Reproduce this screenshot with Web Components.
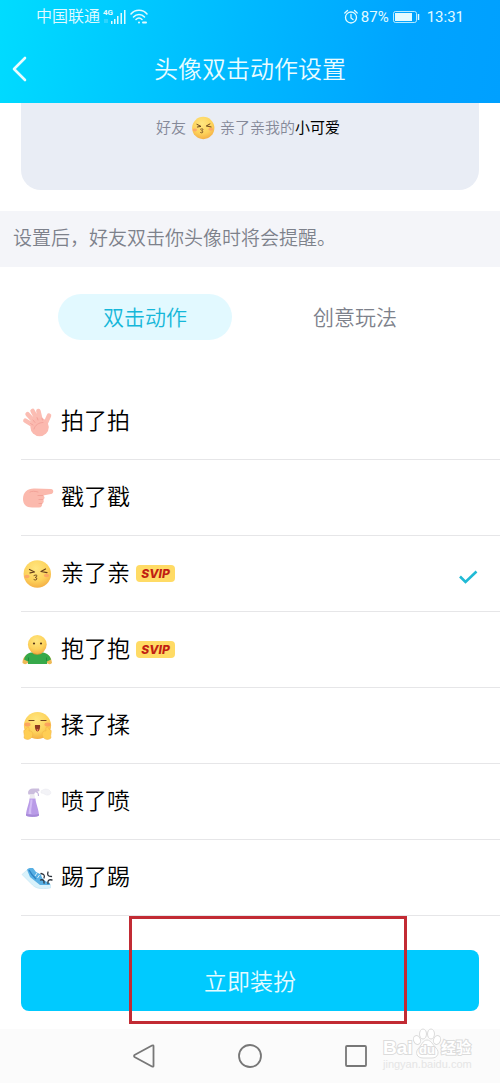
<!DOCTYPE html>
<html lang="zh-CN">
<head>
<meta charset="utf-8">
<meta name="viewport" content="width=device-width, initial-scale=1">
<title>头像双击动作设置</title>
<style>
    body {
        margin: 0;
        background: #fff;
        color: #000;
        font-family: Roboto, "Noto Sans CJK SC", sans-serif;
        font-weight: 350;
    }
</style>
</head>
<body>
<nudge-settings-page></nudge-settings-page>

<script>
// Icon artwork, all drawn on a 32x32 grid
const ICONS = {
    pat: `
        <g stroke="#fbbdb3" stroke-width="4.6" stroke-linecap="round" fill="none">
            <path d="M15 21 4.4 14.6M15.500 18 6.600 8.200M18 17 11.600 5M20 16 17.400 5M23 21 28 9.600"/>
        </g>
        <circle cx="18.6" cy="21" r="9.2" fill="#fbb9af"/>
        <path d="M9.500 17.500 12 19M12 14 14 16.500M16 11.500 17 14M21 12l.4 2M13 23c1-4 5-6.500 9-6.500" stroke="#f09d95" stroke-width=".8" fill="none" stroke-linecap="round"/>`,
    poke: `
        <path d="M2 17C2 10 7 6 14 6.5L30 7c3 0 3 4.5 0 5l-8 1.5c2 1 2 3.500 0 4 1.500 1.500.5 3.500-1 4 .5 2-.5 4-3 4H11C5 25.500 2 22 2 17Z" fill="#fbb9ad"/>
        <path d="M22 13.500h-5M18 17.500h4M18 21.500h3M9 10c2-1 5-1 8 0" stroke="#f09d93" stroke-width=".8" fill="none" stroke-linecap="round"/>`,
    kiss: `
        <circle cx="16.3" cy="16" r="13.7" fill="url(#face)"/>
        <ellipse cx="6" cy="18.5" rx="2.6" ry="1.8" fill="#fc936c" opacity=".65"/>
        <ellipse cx="25.5" cy="17.5" rx="2.6" ry="1.8" fill="#fc936c" opacity=".65"/>
        <path d="M8.500 11.500l5 2.500-4.500.8M24.500 11l-4.500 2.500 6 1.200" stroke="#68411c" stroke-width="1.2" fill="none" stroke-linecap="round" stroke-linejoin="round"/>
        <path d="M13 17.500c2-1 3.800-.3 2.600 1.100-.5.6-1.400.8-1.400.8s2 .3 1.600 1.600c-.3 1.200-1.800 1.200-2.800.6" stroke="#68411c" stroke-width="1" fill="none" stroke-linecap="round"/>`,
    hug: `
        <path d="M1.500 29c0-6 4-9 8-10h13c5 1 8 4 8.500 10-2 2-4 1-5 0H7c-2 1.500-4 1.500-5.500 0Z" fill="#edb955"/>
        <path d="M3 25.500c1-4.500 4-6.500 7-7h12c3 .5 7 2.500 8 7l-4 2V30H7v-2.500Z" fill="#36a94a"/>
        <path d="M7.500 27v-3.500M25.500 27v-3.500" stroke="#218536" stroke-width=".8"/>
        <path d="M11 18.500c2 3 8 3 11 0Z" fill="#d89b31"/>
        <circle cx="16.3" cy="10.5" r="9.4" fill="url(#face)"/>
        <circle cx="13" cy="9.5" r="1.1" fill="#58381b"/>
        <circle cx="20" cy="9.5" r="1.1" fill="#58381b"/>`,
    rub: `
        <circle cx="16.5" cy="15.5" r="13.6" fill="url(#face)"/>
        <ellipse cx="6.5" cy="14.5" rx="3" ry="2" fill="#fc835e" opacity=".6"/>
        <ellipse cx="26.5" cy="14.5" rx="3" ry="2" fill="#fc835e" opacity=".6"/>
        <path d="M8 10.500h5M20 10.500h5" stroke="#754522" stroke-width="1.2" stroke-linecap="round"/>
        <path d="M14 15h5c.5 3-1 6.500-2.500 6.500S13.500 18 14 15Z" fill="#8e3a20"/>
        <path d="M15.500 19.500q1-1 2 0l-1 2Z" fill="#f6775a"/>
        <path d="M3 28c1-3-1-6 0-8 2 1 2-3 4-3s1 3 1 4c3-1 5 3 3 6-2 3-6 3-8 1ZM30 28c-1-3 1-6 0-8-2 1-2-3-4-3s-1 3-1 4c-3-1-5 3-3 6 2 3 6 3 8 1Z" fill="#ffce54" stroke="#efb044" stroke-width=".5"/>`,
    spray: `
        <path d="M20 5c4-3 7-2 8-1 3 2 2 5-1 5-2 1-4-2-7-2Z" fill="#f3f3f7" stroke="#e9e9ef" stroke-width=".5"/>
        <path d="M7 7c0-3 2-4.500 5-4.500h6l.5 2.500-4.500 1.500-1 2H7.500Z" fill="#cbbddd"/>
        <path d="M15 6q2.500 0 2.500 4" stroke="#c3b2dc" stroke-width="1.2" fill="none"/>
        <path d="M9 8.500h4.500l.5 4H8.500Z" fill="#ece9f0"/>
        <path d="M8.500 12.500h6c0 4 3.500 12 3.500 16.500 0 2.500-13 2.500-13 0 0-4.500 3.500-12.500 3.500-16.500Z" fill="#b99be7"/>
        <path d="M9.500 13.500c0 5-2 10-2 14.500h3c-1-4 1-9.500 1-14.500Z" fill="#d3bdf5"/>
        <path d="M5 28c3 1 10 1 13 0v1.500c-2 1.800-11 1.800-13 0Z" fill="#a78ad8"/>`,
    kick: `
        <path d="M1 12.500 6 8l4 7 9 7.500h10.500V26c-5 .8-10 .8-13 0-2-.6-4-2-5-3Z" fill="#d9f2fb" stroke="#bfe3f1" stroke-width=".6"/>
        <path d="M6 7.500C8 5.500 10 6 12 6l3 4 5 2.500c1 5 4 7 9 8.500v2H19L9 15Z" fill="#58b0e4"/>
        <path d="M8 8c2 4 4 6 7 9" stroke="#2e82c2" stroke-width="1.4" fill="none"/>
        <path d="M16 11l-2 3M18.500 13l-2 3" stroke="#fff" stroke-width=".8"/>
        <path d="M20 11.500c3 .5 4 2 3 4.500M27 10c-1 3 0 4.500 3.500 4.500M31 18c-3-.8-4.500.5-4 3.500M19.500 18c2.500-.8 4 .5 3.500 3" stroke="#2e343d" stroke-width="1.3" fill="none" stroke-linecap="round"/>`
};

function render(host, html) {
    const template = document.createElement('template');
    template.innerHTML = html;
    host.attachShadow({ mode: 'open' }).appendChild(template.content.cloneNode(true));
}

class ActionIcon extends HTMLElement {
    static get observedAttributes() {
        return ['name'];
    }

    constructor() {
        super();
        render(this, `
            <style>
                :host {
                    display: block;
                    flex: none;
                    width: 32px;
                    height: 32px;
                }
                svg {
                    display: block;
                    width: 100%;
                    height: 100%;
                    overflow: visible;
                }
            </style>
            <svg viewBox="0 0 32 32" aria-hidden="true">
                <defs>
                    <radialGradient id="face" cx=".45" cy=".3" r=".75">
                        <stop offset="0" stop-color="#ffe680"/>
                        <stop offset=".6" stop-color="#fdd25b"/>
                        <stop offset="1" stop-color="#f3aa42"/>
                    </radialGradient>
                </defs>
                <g></g>
            </svg>
        `);
    }

    attributeChangedCallback(attr, oldVal, newVal) {
        this.shadowRoot.querySelector('g').innerHTML = ICONS[newVal] || '';
    }
}
customElements.define('action-icon', ActionIcon);

class StatusBar extends HTMLElement {
    constructor() {
        super();
        render(this, `
            <style>
                :host {
                    display: flex;
                    align-items: center;
                    justify-content: space-between;
                    height: 34px;
                    padding: 0 36px;
                    font-size: 15px;
                    font-weight: 400;
                    line-height: 20px;
                    color: #e2faff;
                }
                div {
                    display: flex;
                    align-items: center;
                    gap: 3px;
                }
                .carrier {
                    font-size: 16px;
                    font-weight: 350;
                }
                .clock {
                    margin-left: 4px;
                }
                svg {
                    display: block;
                }
            </style>
            <div>
                <span class="carrier">中国联通</span>
                <svg width="24" height="18" viewBox="0 0 24 18" fill="currentColor">
                    <text x="0" y="7" font-size="8" font-weight="700">4G</text>
                    <path d="M8 13h1.500v3H8zM11 11h1.500v5H11zM14 8h1.500v8H14zM17.500 5H19v11h-1.500zM21 2h1.500v14H21z"/>
                    <path d="M2 15v-4M4 11v4" stroke="currentColor" opacity=".4"/>
                </svg>
                <svg width="18" height="18" viewBox="0 0 18 18" fill="none" stroke="currentColor" stroke-width="1.5" stroke-linecap="round">
                    <path d="M1 6c4-5 12-5 16 0M3.500 9c3-3.500 8-3.500 11 0M6 11.500c2-2 4-2 6 0"/>
                    <circle cx="9" cy="14.5" r="1" fill="currentColor" stroke="none"/>
                    <path d="M13 14.500h3" stroke-width="2"/>
                </svg>
            </div>
            <div>
                <svg width="14" height="16" viewBox="0 0 14 16" fill="none" stroke="currentColor" stroke-width="1.3" stroke-linecap="round">
                    <circle cx="7" cy="8.5" r="5.5"/>
                    <path d="M7 5.500V9l2 1.500M.8 4 3.500 1.500M13.200 4 10.500 1.500"/>
                </svg>
                <span>87%</span>
                <svg width="28" height="14" viewBox="0 0 28 14">
                    <rect x="1.5" y="1.5" width="23" height="11" rx="2" fill="none" stroke="currentColor" opacity=".8"/>
                    <rect x="3" y="3" width="17" height="8" fill="currentColor"/>
                    <path d="M26.500 4v6" stroke="currentColor" stroke-width="1.5"/>
                </svg>
                <span class="clock">13:31</span>
            </div>
        `);
    }
}
customElements.define('status-bar', StatusBar);

class PageHeader extends HTMLElement {
    constructor() {
        super();
        render(this, `
            <style>
                :host {
                    display: block;
                    color: #e9fcff;
                    background: linear-gradient(100deg, #00dcff, #00b9ff 48%, #00a4ff 80%, #00a0ff);
                }
                .title-bar {
                    display: grid;
                    grid-template-columns: 40px 1fr 40px;
                    align-items: center;
                    height: 69px;
                }
                button {
                    display: flex;
                    padding: 8px 12px;
                    border: 0;
                    background: none;
                    color: inherit;
                    cursor: pointer;
                }
                h1 {
                    margin: 0;
                    padding-top: 2px;
                    font-size: 24px;
                    font-weight: inherit;
                    line-height: 32px;
                    text-align: center;
                }
            </style>
            <status-bar></status-bar>
            <div class="title-bar">
                <button type="button" aria-label="返回">
                    <svg width="16" height="26" viewBox="0 0 16 26" fill="none" stroke="currentColor" stroke-width="2.6" stroke-linecap="round" stroke-linejoin="round"><path d="M13 2 2 13l11 11"/></svg>
                </button>
                <h1><slot></slot></h1>
            </div>
        `);
    }
}
customElements.define('page-header', PageHeader);

class PreviewCard extends HTMLElement {
    constructor() {
        super();
        render(this, `
            <style>
                :host {
                    display: flex;
                    justify-content: center;
                    align-items: center;
                    gap: 4px;
                    margin: 0 21px 21px;
                    padding: 12px 4px 49px 0;
                    border-radius: 0 0 20px 20px;
                    background: #e9edf5;
                    color: #858998;
                    font-size: 15px;
                    line-height: 26px;
                }
                action-icon {
                    width: 26px;
                    height: 26px;
                }
                b {
                    color: #000;
                    font-weight: 400;
                }
            </style>
            <span>好友</span>
            <action-icon name="kiss"></action-icon>
            <span>亲了亲我的<b>小可爱</b></span>
        `);
    }
}
customElements.define('preview-card', PreviewCard);

class NoticeBar extends HTMLElement {
    constructor() {
        super();
        render(this, `
            <style>
                :host {
                    display: block;
                    padding: 14px 13px;
                    background: #f4f5f9;
                    color: #7d818b;
                    font-size: 19px;
                    line-height: 28px;
                }
            </style>
            <slot></slot>
        `);
    }
}
customElements.define('notice-bar', NoticeBar);

class ModeTabs extends HTMLElement {
    constructor() {
        super();
        render(this, `
            <style>
                :host {
                    display: flex;
                    gap: 36px;
                    padding: 27px 58px 44px;
                }
                button {
                    flex: 1;
                    height: 46px;
                    padding: 0 0 2px;
                    border: 0;
                    border-radius: 23px;
                    background: none;
                    color: #7d818b;
                    font: inherit;
                    font-size: 21px;
                    cursor: pointer;
                }
                button[aria-selected="true"] {
                    background: #e2f9ff;
                    color: #15b7d9;
                }
            </style>
            <button type="button" role="tab" aria-selected="true">双击动作</button>
            <button type="button" role="tab" aria-selected="false">创意玩法</button>
        `);
        const tabs = this.shadowRoot.querySelectorAll('button');
        tabs.forEach(tab => tab.addEventListener('click', () => {
            tabs.forEach(t => t.setAttribute('aria-selected', String(t === tab)));
        }));
    }

    connectedCallback() {
        this.setAttribute('role', 'tablist');
    }
}
customElements.define('mode-tabs', ModeTabs);

class SvipBadge extends HTMLElement {
    constructor() {
        super();
        render(this, `
            <style>
                :host {
                    display: block;
                    width: 39px;
                    border-radius: 4px;
                    background: #ffdb65;
                    color: #c11f13;
                    font: italic 800 12px/17px Inter, sans-serif;
                    text-align: center;
                }
            </style>
            SVIP
        `);
    }
}
customElements.define('svip-badge', SvipBadge);

class ActionItem extends HTMLElement {
    constructor() {
        super();
        render(this, `
            <style>
                :host {
                    display: block;
                    margin-left: 21px;
                    border-bottom: 1px solid #e6e6e8;
                }
                label {
                    display: flex;
                    align-items: center;
                    height: 75px;
                    padding-right: 22px;
                    cursor: pointer;
                }
                .name {
                    margin: 0 6px 0 8px;
                    font-size: 23px;
                    line-height: 32px;
                }
                .mark {
                    display: grid;
                    place-items: center;
                    margin-left: auto;
                    padding-top: 6px;
                }
                input, svg {
                    grid-area: 1 / 1;
                    width: 20px;
                    height: 16px;
                    margin: 0;
                }
                input {
                    appearance: none;
                    cursor: pointer;
                }
                svg {
                    visibility: hidden;
                    pointer-events: none;
                }
                input:checked + svg {
                    visibility: visible;
                }
                svip-badge {
                    display: none;
                }
                :host([svip]) svip-badge {
                    display: block;
                }
            </style>
            <label>
                <action-icon></action-icon>
                <span class="name"><slot></slot></span>
                <svip-badge></svip-badge>
                <span class="mark">
                    <input type="radio" name="action">
                    <svg viewBox="0 0 20 16" fill="none" stroke="#20bad5" stroke-width="2.6"><path d="M2 7.500 7.500 13 18.500 2.500"/></svg>
                </span>
            </label>
        `);
        this._input = this.shadowRoot.querySelector('input');
        this._input.addEventListener('change', () => {
            this.dispatchEvent(new CustomEvent('action-select', { bubbles: true }));
        });
    }

    connectedCallback() {
        this.shadowRoot.querySelector('action-icon').setAttribute('name', this.getAttribute('icon'));
        this._input.checked = this.hasAttribute('checked');
        this._input.setAttribute('aria-label', this.textContent);
    }

    set checked(val) {
        this._input.checked = val;
    }
}
customElements.define('action-item', ActionItem);

class ActionList extends HTMLElement {
    constructor() {
        super();
        render(this, `
            <style>
                :host {
                    display: block;
                }
            </style>
            <slot></slot>
        `);
        // Each radio lives in its own shadow root, so keep the choice exclusive here
        this.addEventListener('action-select', (e) => {
            this.querySelectorAll('action-item').forEach(item => {
                item.checked = item === e.target;
            });
        });
    }
}
customElements.define('action-list', ActionList);

class ApplyBar extends HTMLElement {
    constructor() {
        super();
        render(this, `
            <style>
                :host {
                    display: block;
                    position: relative;
                    padding: 34px 21px 18px;
                }
                button {
                    display: block;
                    width: 100%;
                    height: 61px;
                    padding: 4px 0 0;
                    border: 0;
                    border-radius: 8px;
                    background: #00caff;
                    color: #e5fbff;
                    font: inherit;
                    font-size: 23px;
                    line-height: 32px;
                    cursor: pointer;
                }
                /* red frame laid over the button */
                .frame {
                    position: absolute;
                    inset: 0 93px 5px 129px;
                    border: 3px solid #c22b34;
                    pointer-events: none;
                }
            </style>
            <button type="button"><slot></slot></button>
            <div class="frame"></div>
        `);
    }
}
customElements.define('apply-bar', ApplyBar);

class WaterMark extends HTMLElement {
    constructor() {
        super();
        render(this, `
            <style>
                :host {
                    display: block;
                    pointer-events: none;
                }
                svg {
                    display: block;
                    overflow: visible;
                }
            </style>
            <svg width="92" height="44" viewBox="0 0 92 44" fill="#fff" stroke="#dcdcdc" stroke-width="1">
                <ellipse cx="36" cy="12" rx="3.5" ry="4.5" transform="rotate(-20 36 12)"/>
                <ellipse cx="42" cy="6" rx="3.5" ry="5"/>
                <ellipse cx="50" cy="6" rx="3.5" ry="5"/>
                <ellipse cx="56" cy="12" rx="3.5" ry="4.5" transform="rotate(20 56 12)"/>
                <path d="M46 12c4 0 6 5 9 8 4 4 2 10-4 10h-9c-6 0-8-5-5-9 3-3 5-9 9-9Z"/>
                <g font-family="Liberation Sans" font-weight="700" paint-order="stroke" stroke-width="2">
                    <text x="2" y="26" font-size="19">Bai</text>
                    <text x="38" y="26" font-size="13">du</text>
                </g>
                <text x="60" y="25" font-size="15" font-weight="700" font-family="Noto Sans CJK SC" paint-order="stroke" stroke-width="2">经验</text>
                <text x="2" y="40" font-size="11" font-weight="400" font-family="Liberation Sans" fill="#e5e5e5" stroke="none">jingyan.baidu.com</text>
            </svg>
        `);
    }
}
customElements.define('water-mark', WaterMark);

class SystemNav extends HTMLElement {
    constructor() {
        super();
        render(this, `
            <style>
                :host {
                    display: flex;
                    align-items: center;
                    justify-content: center;
                    gap: 66px;
                    position: relative;
                    height: 54px;
                    margin-top: auto;
                    background: #fbfbfb;
                }
                button {
                    display: flex;
                    padding: 8px;
                    border: 0;
                    background: none;
                    cursor: pointer;
                }
                svg {
                    fill: none;
                    stroke: #777;
                    stroke-width: 1.8;
                    stroke-linejoin: round;
                }
                water-mark {
                    position: absolute;
                    right: 27px;
                    bottom: 11px;
                }
            </style>
            <button type="button" aria-label="返回"><svg width="24" height="24" viewBox="0 0 24 24"><path d="M2.500 11Q1.500 12 2.500 13L20 22.500Q21.500 23 21.500 22V2Q21.500 1 20 1.500Z"/></svg></button>
            <button type="button" aria-label="主页"><svg width="24" height="24" viewBox="0 0 24 24"><circle cx="12" cy="12" r="11"/></svg></button>
            <button type="button" aria-label="最近任务"><svg width="24" height="24" viewBox="0 0 24 24"><rect x="2" y="2" width="20" height="20" rx="1"/></svg></button>
            <water-mark></water-mark>
        `);
    }
}
customElements.define('system-nav', SystemNav);

class NudgeSettingsPage extends HTMLElement {
    constructor() {
        super();
        render(this, `
            <style>
                :host {
                    display: flex;
                    flex-direction: column;
                    min-height: 100vh;
                }
            </style>
            <page-header>头像双击动作设置</page-header>
            <preview-card></preview-card>
            <notice-bar>设置后，好友双击你头像时将会提醒。</notice-bar>
            <mode-tabs></mode-tabs>
            <action-list>
                <action-item icon="pat">拍了拍</action-item>
                <action-item icon="poke">戳了戳</action-item>
                <action-item icon="kiss" svip checked>亲了亲</action-item>
                <action-item icon="hug" svip>抱了抱</action-item>
                <action-item icon="rub">揉了揉</action-item>
                <action-item icon="spray">喷了喷</action-item>
                <action-item icon="kick">踢了踢</action-item>
            </action-list>
            <apply-bar>立即装扮</apply-bar>
            <system-nav></system-nav>
        `);
    }
}
customElements.define('nudge-settings-page', NudgeSettingsPage);
</script>
</body>
</html>
